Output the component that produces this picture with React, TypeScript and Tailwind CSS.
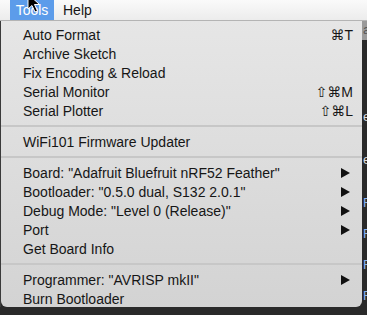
import React from "react";

type Item =
  | { kind: "item"; label: string; shortcut?: string; submenu?: boolean }
  | { kind: "sep" };

const ITEMS: Item[] = [
  { kind: "item", label: "Auto Format", shortcut: "⌘T" },
  { kind: "item", label: "Archive Sketch" },
  { kind: "item", label: "Fix Encoding & Reload" },
  { kind: "item", label: "Serial Monitor", shortcut: "⇧⌘M" },
  { kind: "item", label: "Serial Plotter", shortcut: "⇧⌘L" },
  { kind: "sep" },
  { kind: "item", label: "WiFi101 Firmware Updater" },
  { kind: "sep" },
  { kind: "item", label: 'Board: "Adafruit Bluefruit nRF52 Feather"', submenu: true },
  { kind: "item", label: 'Bootloader: "0.5.0 dual, S132 2.0.1"', submenu: true },
  { kind: "item", label: 'Debug Mode: "Level 0 (Release)"', submenu: true },
  { kind: "item", label: "Port", submenu: true },
  { kind: "item", label: "Get Board Info" },
  { kind: "sep" },
  { kind: "item", label: 'Programmer: "AVRISP mkII"', submenu: true },
  { kind: "item", label: "Burn Bootloader" },
];

export default function App() {
  return (
    <div
      className="relative w-[367px] h-[315px] overflow-hidden bg-[#2a2a2a] text-[#161616]"
      style={{ fontFamily: '"Liberation Sans", "DejaVu Sans", sans-serif' }}
    >
      {/* menu bar */}
      <div className="flex h-[21px] items-stretch bg-gradient-to-b from-[#fafafa] to-[#ececec] border-b border-[#b4b4b4] text-[14px]">
        <div className="ml-[10px] w-[44px] flex items-center justify-center bg-[#5c9cea] text-white">
          Tools
        </div>
        <div className="flex items-center pl-[9px]">Help</div>
      </div>

      <div className="flex">
        <div className="w-[1px] shrink-0 bg-[#3a3a3a]" />
        <div className="w-[361px] shrink-0 h-[286px] rounded-b-[6px] bg-gradient-to-b from-[#e6e6e6] to-[#d3d3d3] pt-[4px] text-[14px]">
          {ITEMS.map((it, i) =>
            it.kind === "sep" ? (
              <div key={i} className="h-[12px] flex items-center">
                <div className="w-full h-[2px] bg-[#c7c7c7]" />
              </div>
            ) : (
              <div key={i} className="h-[19px] flex items-center pl-[22px] pr-[9px]">
                <span className="flex-1 leading-none">{it.label}</span>
                {it.shortcut && (
                  <span className="text-[14px] leading-none">{it.shortcut}</span>
                )}
                {it.submenu && (
                  <svg width="9" height="10" viewBox="0 0 9 10" className="mr-[3px]">
                    <polygon points="0,0 9,5 0,10" fill="#111" />
                  </svg>
                )}
              </div>
            )
          )}
        </div>
        <div className="flex-1 min-w-0 flex flex-col text-[13px] leading-none">
          <div className="h-[19px] bg-[#9a9a9a] text-[#555] pl-[1px] pt-[2px]">ar</div>
          <div className="h-[70px]" />
          <div className="text-[#ddd] pl-[1px]">er</div>
          <div className="h-[30px]" />
          <div className="text-[#ddd] pl-[1px]">er</div>
          <div className="h-[30px]" />
          <div className="text-[#8ab4f0] pl-[1px]">F</div>
          <div className="h-[18px]" />
          <div className="text-[#8ab4f0] pl-[1px]">F</div>
          <div className="h-[18px]" />
          <div className="text-[#8ab4f0] pl-[1px]">F</div>
          <div className="h-[18px]" />
          <div className="text-[#8ab4f0] pl-[1px]">F</div>
        </div>
      </div>

      {/* mouse cursor */}
      <svg
        width="14"
        height="20"
        viewBox="0 0 14 20"
        className="absolute left-[27px] top-[-7px]"
      >
        <polygon
          points="1,1 1,16 5,12.5 8,19 10.5,18 7.5,11.5 12.5,11.5"
          fill="#000"
          stroke="#fff"
          strokeWidth="1"
        />
      </svg>
    </div>
  );
}
